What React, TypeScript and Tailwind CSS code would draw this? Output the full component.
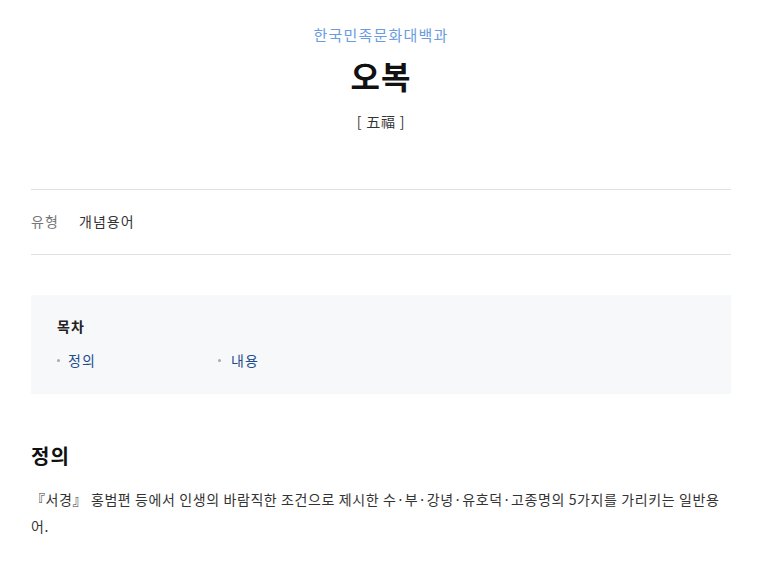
const FONT = "font-['Noto_Sans_CJK_KR','Noto_Sans',sans-serif]";

const tocItems = ['정의', '내용'];

export default function App() {
  return (
    <div className={`${FONT} bg-white min-h-[565px] pl-[31px] pt-[22px] text-[#333]`}>
      <div className="w-[700px]">
        {/* Header */}
        <div className="flex flex-col items-center">
          <div className="text-[15px] leading-[26px] tracking-[1.2px] text-[#6a9de0]">한국민족문화대백과</div>
          <h1 className="mt-[7px] text-[32px] leading-[40px] tracking-[1px] font-bold text-[#111]">오복</h1>
          <div className="mt-[15px] text-[14px] leading-[22px] tracking-[0.8px] text-[#333]">[ 五福 ]</div>
        </div>

        {/* Info */}
        <div className="mt-[57px] border-t border-b border-[#e2e2e2] pt-[19px] pb-[21px] flex items-center text-[14px] leading-[24px] tracking-[1px]">
          <span className="text-[#777] w-[48px]">유형</span>
          <span className="text-[#333]">개념용어</span>
        </div>

        {/* TOC */}
        <div className="mt-[40px] bg-[#f6f8fa] h-[99px] px-[26px] pt-[20px]">
          <div className="text-[14px] leading-[22px] tracking-[1px] font-bold text-[#222]">목차</div>
          <ul className="mt-[12px] flex text-[14px] leading-[22px] tracking-[1px]">
            {tocItems.map((item, i) => (
              <li
                key={item}
                className={`w-[161px] flex items-center text-[#1e4d8f] ${i === 0 ? 'gap-[8px]' : 'gap-[10px]'}`}
              >
                <span className="w-[3px] h-[3px] bg-[#aaa] rounded-full" />
                {item}
              </li>
            ))}
          </ul>
        </div>

        {/* Section */}
        <h2 className="mt-[47px] text-[20px] leading-[30px] tracking-[1px] font-bold text-[#111]">정의</h2>
        <p className="mt-[15px] text-[14px] leading-[27px] tracking-[0.6px] text-[#333]">
          『서경』 홍범편 등에서 인생의 바람직한 조건으로 제시한 수·부·강녕·유호덕·고종명의 5가지를 가리키는 일반용어.
        </p>
      </div>
    </div>
  );
}
